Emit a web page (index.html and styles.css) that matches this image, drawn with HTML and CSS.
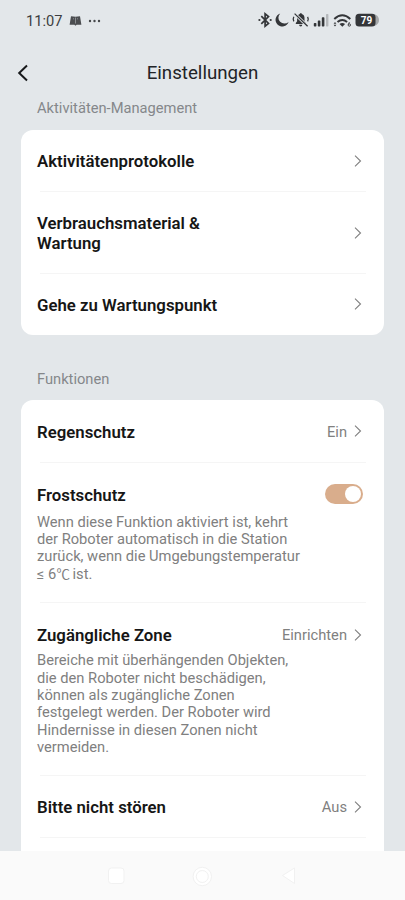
FILE: index.html
```html
<!DOCTYPE html>
<html lang="de">
<head>
<meta charset="utf-8">
<meta name="viewport" content="width=device-width, initial-scale=1">
<title>Einstellungen</title>
<link rel="stylesheet" href="styles.css">
</head>
<body>
<svg width="0" height="0" class="defs" aria-hidden="true">
  <symbol id="chevron" viewBox="0 0 8 12"><path d="M1 .7 6.5 6 1 11.3" fill="none" stroke="currentColor" stroke-width="1.1"/></symbol>
</svg>
<div class="screen">
  <div class="status">
    <span class="time">11:07</span>
    <svg class="book" width="13" height="12" viewBox="0 0 13 12"><path d="M2 1.2 6.5 1.8 11 1.2l1.4 8.6H7.6l-1.1 1-1.1-1H.6Z" fill="#4b4d50"/><path d="M6.5 2.5v6M4 3.8h1M8 3.8h1" stroke="#a8abad" stroke-width=".7"/></svg>
    <svg class="dots" width="13" height="4" viewBox="0 0 13 4" fill="#45474a"><circle cx="2" cy="2" r="1.2"/><circle cx="6.5" cy="2" r="1.2"/><circle cx="11" cy="2" r="1.2"/></svg>
    <svg class="indicators" width="122" height="18" viewBox="257 11 122 18" fill="#343639">
      <g fill="none" stroke="#343639" stroke-width="1.7"><path d="m261.3 16.2 7.2 7.2-3.4 2.8V13.8l3.4 2.8-7.2 7.2"/></g>
      <circle cx="259.4" cy="20" r="1.1"/><circle cx="270.7" cy="20" r="1.1"/>
      <path d="M280.2 13.4a6.7 6.7 0 1 0 8.4 8.5 5.7 5.7 0 0 1-8.4-8.5Z"/>
      <path d="M295.8 24v-1l1.3-1.7v-3.5c0-2 1.3-3.4 2.8-3.8v-.8h1.8v.8c1.7.4 2.8 1.9 2.8 3.8v3.5l1.5 1.7v1Zm3.3.8h3.2a1.6 1.6 0 0 1-3.2 0Z"/>
      <path d="m295 14 12.5 12.2" stroke="#e3e7ea" stroke-width="3"/>
      <g fill="none" stroke="#343639" stroke-width="1.3"><path d="m294.6 13.6 13 12.7M293.8 16.8q-1.2 2.3 0 4.6M307.6 16.8q1.4 2.3 0 4.6"/></g>
      <rect x="313.8" y="23" width="2.6" height="3.5" rx=".7"/><rect x="317.8" y="20.4" width="2.6" height="6.1" rx=".7"/><rect x="321.8" y="17.3" width="2.6" height="9.2" rx=".7"/><rect x="326" y="14" width="2.4" height="12.5" rx=".7" fill="#b5b8bb"/>
      <g fill="none" stroke="#343639" stroke-width="2"><path d="M334.3 18.9q8-7.4 16 0M337.5 22q4.8-4.1 9.6 0"/></g>
      <path d="m339.5 24q2.8-2.2 5.6 0l-2.8 2.8Z"/>
      <path d="m333.6 23.7 1.4-1.8 1.4 1.8Zm0 1 1.4 1.8 1.4-1.8Z"/>
      <circle cx="349.3" cy="25" r="1.2" fill="none" stroke="#343639" stroke-width=".9"/><path d="m348.4 24.5 1-2.4" stroke="#343639" stroke-width=".9"/>
      <path d="M373 14h1.5q4.5 2 4.5 6t-4.5 6H373Z" fill="#a5a8aa"/>
      <rect x="355.5" y="13.7" width="20" height="12.8" rx="3.5"/>
      <text class="battery" x="366.6" y="23.8" text-anchor="middle">79</text>
    </svg>
  </div>
  <header class="header">
    <svg class="back" width="12" height="18" viewBox="0 0 12 18"><path d="M10 1.5 2.2 9 10 16.5" fill="none" stroke="#17191b" stroke-width="2"/></svg>
    <h1>Einstellungen</h1>
  </header>
  <main class="content">
    <h2 class="section first">Aktivitäten-Management</h2>
    <section class="card">
      <div class="row"><h3>Aktivitätenprotokolle</h3><svg class="chevron"><use href="#chevron"/></svg></div>
      <div class="row"><h3>Verbrauchsmaterial &amp;<br>Wartung</h3><svg class="chevron"><use href="#chevron"/></svg></div>
      <div class="row last"><h3>Gehe zu Wartungspunkt</h3><svg class="chevron"><use href="#chevron"/></svg></div>
    </section>
    <h2 class="section second">Funktionen</h2>
    <section class="card functions">
      <div class="row"><h3>Regenschutz</h3><span class="value">Ein</span><svg class="chevron"><use href="#chevron"/></svg></div>
      <div class="row described frost">
        <div class="line"><h3>Frostschutz</h3><span class="toggle"></span></div>
        <p>Wenn diese Funktion aktiviert ist, kehrt<br>der Roboter automatisch in die Station<br>zurück, wenn die Umgebungstemperatur<br>≤ 6<span class="unit">℃</span> ist.</p>
      </div>
      <div class="row described zone">
        <div class="line"><h3>Zugängliche Zone</h3><span class="value">Einrichten</span><svg class="chevron"><use href="#chevron"/></svg></div>
        <p>Bereiche mit überhängenden Objekten,<br>die den Roboter nicht beschädigen,<br>können als zugängliche Zonen<br>festgelegt werden. Der Roboter wird<br>Hindernisse in diesen Zonen nicht<br>vermeiden.</p>
      </div>
      <div class="row"><h3>Bitte nicht stören</h3><span class="value">Aus</span><svg class="chevron"><use href="#chevron"/></svg></div>
      <div class="row"></div>
    </section>
  </main>
  <nav class="navbar">
    <svg width="405" height="48" viewBox="0 0 405 48" fill="#fff" stroke="#f1f1f1">
      <rect x="108.5" y="17" width="15.5" height="15.5" rx="3"/>
      <circle cx="202.3" cy="25.5" r="9.2"/><circle cx="202.3" cy="25.5" r="6"/>
      <path d="M282.5 24.5 294.5 17v15.5Z" stroke-linejoin="round"/>
    </svg>
  </nav>
</div>
</body>
</html>
```
FILE: styles.css
```css
* { box-sizing: border-box; }
body { margin: 0; font-family: Roboto, "Noto Sans CJK SC", sans-serif; background: #e3e7ea; }
h1, h2, h3, p { margin: 0; }
.defs { display: block; }
.screen { height: 900px; overflow: hidden; display: flex; flex-direction: column; }
.status { height: 40px; flex: none; display: flex; align-items: center; padding: 0 26px; color: #3c3e41; }
.time { font-size: 14.7px; line-height: 20px; width: 43px; padding-top: 1px; }
.book { margin-top: 2px; }
.dots { margin-left: 6px; margin-top: 1px; }
.indicators { margin-left: auto; }
.battery { font: bold 10px Roboto, sans-serif; fill: #fff; }
.header { height: 59px; flex: none; display: grid; grid-template-columns: 40px 1fr 40px; align-items: center; padding: 7px 0 0; }
.back { margin-left: 17px; }
h1 { font-size: 18.7px; font-weight: 400; line-height: 24px; text-align: center; color: #222427; }
.content { flex: 1; min-height: 0; overflow: hidden; padding: 0 21px; }
.section { font-size: 14.7px; font-weight: 400; line-height: 18px; color: #85878a; padding-left: 16px; }
.section.second { margin-top: 35px; }
.card { background: #fff; border-radius: 12px; margin-top: 12.5px; }
.row { position: relative; display: flex; align-items: center; padding: 21.5px 22px 20.5px 16px; min-height: 62px; color: #808080; }
.row.last { height: 61.5px; min-height: 0; }
.row + .row::before { content: ""; position: absolute; top: -0.5px; left: 19px; right: 18px; height: 1px; background: #f5f5f5; }
h3 { font-size: 16.8px; font-weight: 600; line-height: 20px; color: #161616; flex: 1; white-space: nowrap; }
.chevron { width: 8px; height: 12px; margin-top: -1px; flex: none; color: #808080; }
.value { font-size: 14.7px; line-height: 18px; margin-right: 7px; }
.described { display: block; padding-bottom: 0; }
.line { display: flex; align-items: center; height: 22px; }
p { font-size: 14.7px; line-height: 17.3px; color: #808080; white-space: nowrap; }
.unit { display: inline-block; width: 12.5px; font-size: 13.5px; line-height: 1; }
.functions { margin-top: 12.4px; }
.frost { height: 140.5px; }
.frost p { margin-top: 8px; }
.zone { height: 173px; }
.zone p { margin-top: 6px; }
.toggle { width: 38px; height: 20px; border-radius: 10px; background: #d9ad8c; display: flex; justify-content: flex-end; padding: 2px; margin: -1.5px -1px 0 0; }
.toggle::after { content: ""; width: 16px; height: 16px; border-radius: 50%; background: #fff; }
.navbar { height: 49px; flex: none; background: #fafafa; }
.navbar svg { display: block; }
```
